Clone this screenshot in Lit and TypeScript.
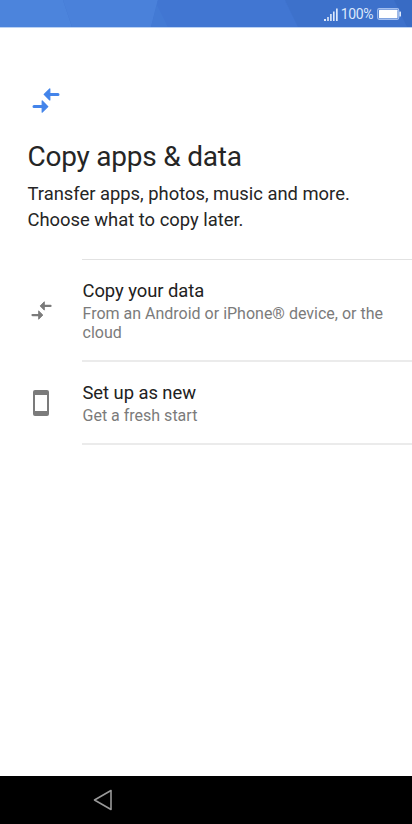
import { LitElement, html, css } from "lit";
import { customElement, property } from "lit/decorators.js";

@customElement("transfer-icon")
class TransferIcon extends LitElement {
  static styles = css`
    :host { display: block; }
    svg { display: block; width: 100%; height: 100%; }
    .line { fill: none; stroke: currentColor; stroke-width: 3; stroke-linecap: round; }
    .head { fill: currentColor; stroke: currentColor; stroke-width: 1.2; stroke-linejoin: round; }
  `;
  render() {
    return html`<svg viewBox="0 0 28 25">
      <path class="line" d="M17 6.4H26M2 18.6H11" />
      <path class="head" d="M12.2 6.4L17.8 .8V12ZM15.8 18.6L10.2 13V24.2Z" />
    </svg>`;
  }
}

@customElement("status-bar")
class StatusBar extends LitElement {
  static styles = css`
    :host { display: block; background: #4074d0; border-bottom: 1px solid #bbd2f3; box-sizing: border-box; height: 28px; }
    .bar { display: grid; height: 27px; }
    .bar > * { grid-area: 1 / 1; }
    .facets { width: 412px; height: 27px; display: block; }
    .status { display: flex; align-items: center; justify-content: flex-end; padding: 1px 11px 0 0; color: #dce8fb; font: 14px/20px Roboto, sans-serif; letter-spacing: -0.4px; }
    .signal { width: 14px; height: 13px; margin-right: 3px; }
    .battery { width: 24px; height: 12px; margin-left: 4px; }
  `;
  render() {
    return html`<div class="bar">
      <svg class="facets" viewBox="0 0 412 27">
        <path fill="#4c84dc" d="M0 0H63L72 27H0Z" />
        <path fill="#4a81da" d="M63 0H158L151 27H72Z" />
        <path fill="#437ad4" d="M158 0L168 27H151L156 7Z" />
        <path fill="#4176d2" d="M158 0H285L298 27H168L157 5Z" />
        <path fill="#3d71cb" d="M285 0H394L407 27H298Z" />
        <path fill="#386bc4" d="M394 0H412V27H407Z" />
      </svg>
      <div class="status">
        <svg class="signal" viewBox="0 0 14 13">
          <path fill="currentColor" d="M0 11h2v2H0zM3.2 9h1.6v4H3.2zM6.1 6h1.6v7H6.1zM9 3.5h1.6V13H9zM12 .5h1.7V13H12z" />
        </svg>
        <span>100%</span>
        <svg class="battery" viewBox="0 0 24 12">
          <rect x=".7" y=".7" width="21" height="10.6" rx="1.5" fill="none" stroke="#a3bff0" stroke-width="1.2" />
          <rect x="2" y="1.8" width="18.5" height="8.4" rx=".5" fill="#fff" />
          <rect x="22.3" y="3.5" width="1.7" height="5" rx=".5" fill="#dce8fb" />
        </svg>
      </div>
    </div>`;
  }
}

@customElement("option-row")
class OptionRow extends LitElement {
  @property() heading = "";
  @property() detail = "";
  static styles = css`
    :host { display: grid; grid-template-columns: 82px 1fr; font-family: Roboto, sans-serif; }
    .icon { display: flex; align-items: center; padding: 0 0 2px 30.5px; }
    .text { padding: 18px 20px 18px 0; border-bottom: 2px solid #ebebeb; }
    .heading { padding-left: 0.5px; font-size: 18.4px; line-height: 25px; color: #212121; letter-spacing: -0.05px; }
    .detail { font-size: 16px; line-height: 19px; padding: 1px 0 0 0.5px; color: #7b7b7b; }
  `;
  render() {
    return html`<div class="icon"><slot></slot></div>
      <div class="text">
        <div class="heading">${this.heading}</div>
        <div class="detail">${this.detail}</div>
      </div>`;
  }
}

@customElement("app-root")
class AppRoot extends LitElement {
  static styles = css`
    :host { display: flex; flex-direction: column; width: 412px; height: 824px; background: #fff; font-family: Roboto, sans-serif; color: #252525; overflow: hidden; }
    main { flex: 1; padding-top: 60px; }
    .header { padding-left: 27.5px; }
    .hero { width: 28px; height: 25px; margin-left: 4px; color: #4384ea; }
    h1 { margin: 26px 0 0; font-size: 28px; font-weight: 400; line-height: 36px; letter-spacing: -0.23px; }
    p { margin: 6px 0 0; font-size: 18.4px; line-height: 26px; letter-spacing: -0.01px; }
    .options { margin-top: 26px; }
    .top { height: 1px; margin-left: 82px; background: #e2e2e2; }
    .small { width: 21px; height: 19px; color: #7b7b7b; }
    .phone { display: block; width: 16px; height: 26px; margin-left: 2.5px; }
    nav { height: 48px; background: #000; display: flex; align-items: center; padding-left: 93px; }
    .back { width: 20px; height: 22px; }
  `;
  render() {
    return html`
      <status-bar></status-bar>
      <main>
        <div class="header">
          <transfer-icon class="hero"></transfer-icon>
          <h1>Copy apps &amp; data</h1>
          <p>Transfer apps, photos, music and more.<br />Choose what to copy later.</p>
        </div>
        <div class="options">
          <div class="top"></div>
          <option-row heading="Copy your data" detail="From an Android or iPhone® device, or the cloud">
            <transfer-icon class="small"></transfer-icon>
          </option-row>
          <option-row heading="Set up as new" detail="Get a fresh start">
            <svg class="phone" viewBox="0 0 16 26">
              <path fill="#7b7b7b" fill-rule="evenodd" d="M2 0H14Q16 0 16 2V24Q16 26 14 26H2Q0 26 0 24V2Q0 0 2 0ZM2 5V21H14V5Z" />
            </svg>
          </option-row>
        </div>
      </main>
      <nav>
        <svg class="back" viewBox="0 0 20 22">
          <path d="M1.5 11L18 1.5V20.5Z" fill="none" stroke="#999" stroke-width="1.6" stroke-linejoin="round" />
        </svg>
      </nav>`;
  }
}
